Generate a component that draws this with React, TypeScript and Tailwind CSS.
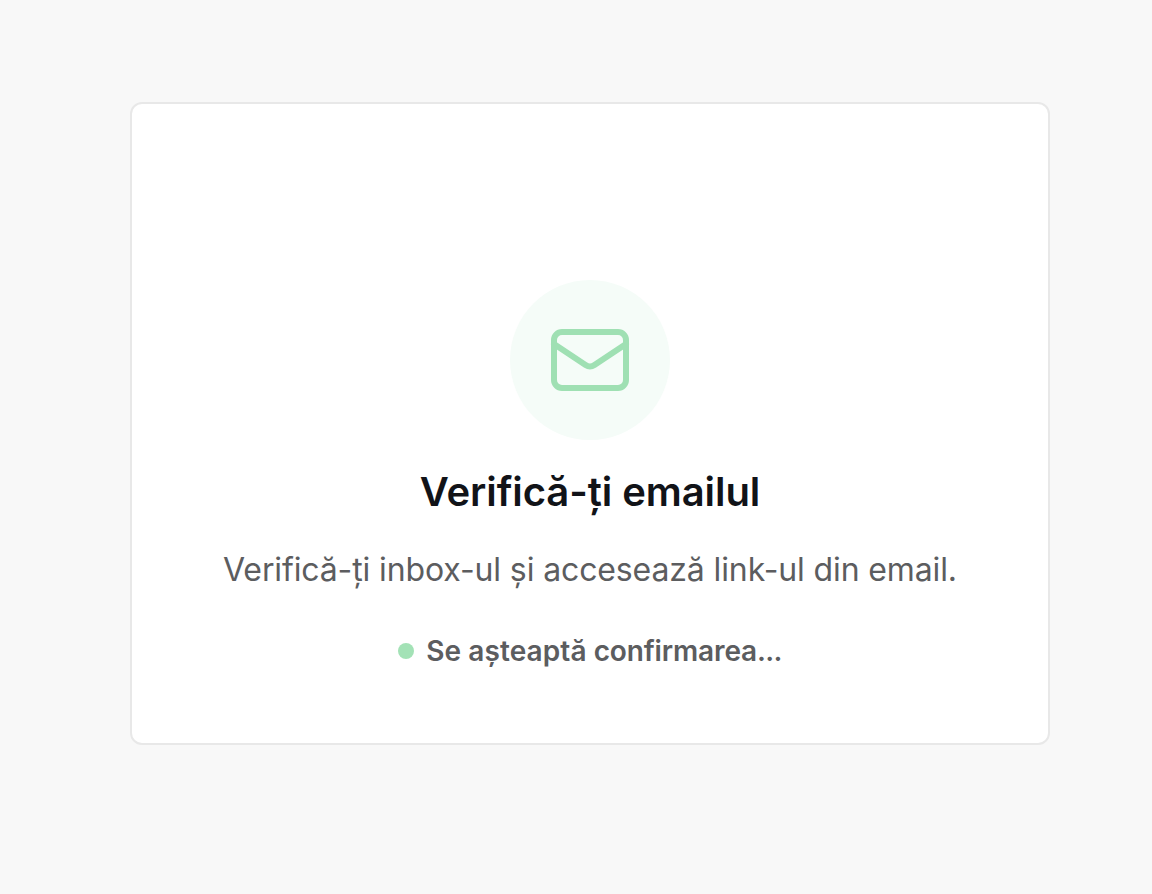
function MailIcon() {
  return (
    <svg
      className="size-24 text-[#9fe0b3]"
      viewBox="0 0 24 24"
      fill="none"
      stroke="currentColor"
      strokeWidth={1.5}
      strokeLinecap="round"
      strokeLinejoin="round"
      aria-hidden="true"
    >
      <path d="M3 8l7.89 5.26a2 2 0 002.22 0L21 8M5 19h14a2 2 0 002-2V7a2 2 0 00-2-2H5a2 2 0 00-2 2v10a2 2 0 002 2z" />
    </svg>
  );
}

export default function App() {
  return (
    <main className="flex h-[894px] justify-center bg-[#f8f8f8] pl-7 pt-[102px] font-['Inter',sans-serif]">
      <section className="flex h-[643px] w-[920px] flex-col items-center rounded-xl border-2 border-[#e8e8e8] bg-white pt-[176px]">
        <div className="flex size-40 items-center justify-center rounded-full bg-[#f5fcf8]">
          <MailIcon />
        </div>
        <h1 className="mt-[30px] text-[40px] leading-[44px] font-semibold tracking-[-0.08px] whitespace-nowrap text-[#111318]">
          Verifică-ți emailul
        </h1>
        <p className="mt-8 text-[32px] leading-[48px] tracking-[-0.12px] whitespace-nowrap text-[#5c5d5f]">
          Verifică-ți inbox-ul și accesează link-ul din email.
        </p>
        <div className="mt-9 flex items-center gap-3 text-[28px] leading-[42px] font-semibold whitespace-nowrap text-[#5c5d5f]">
          <span className="size-4 rounded-full bg-[#a3e2b6]" />
          <span className="tracking-[0.08px]">
            Se așteaptă <span className="tracking-[-0.15px]">confirmarea</span>
            <span className="tracking-[-0.7px]">...</span>
          </span>
        </div>
      </section>
    </main>
  );
}
